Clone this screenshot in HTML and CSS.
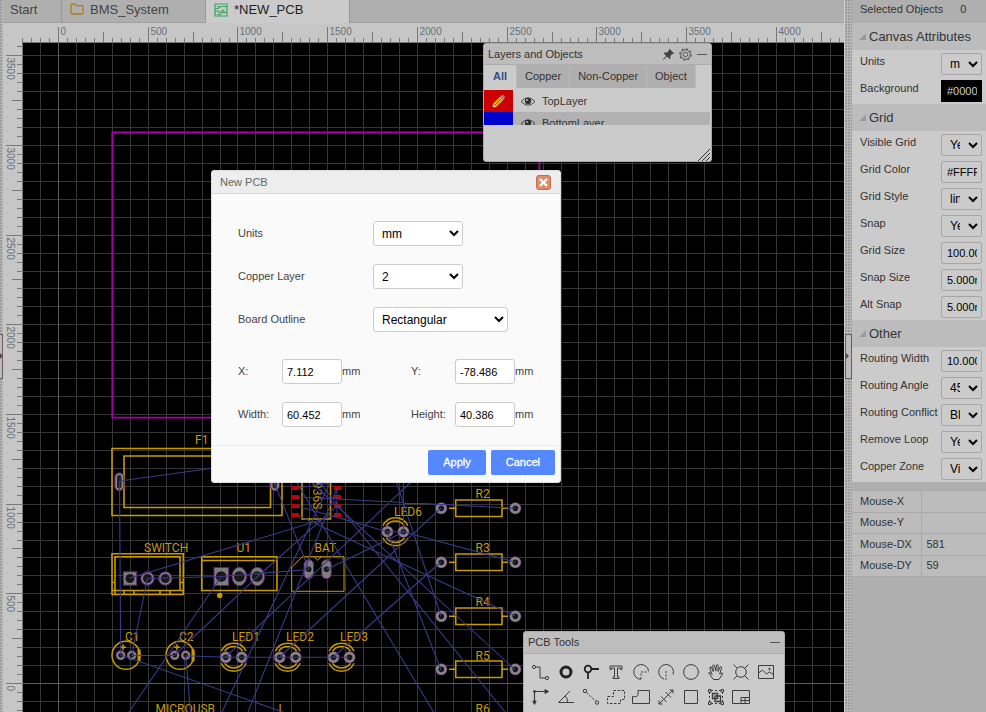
FILE: index.html
```html
<!DOCTYPE html>
<html lang="en">
<head>
<meta charset="utf-8">
<title>PCB Editor</title>
<link rel="stylesheet" href="styles.css">
</head>
<body>
<div class="app">
  <div class="splitter splitter-left"><span class="handle"></span></div>

  <main class="editor">
    <div class="doc-tabs" role="tablist">
      <button class="doc-tab tab-start" role="tab">Start</button>
      <button class="doc-tab" role="tab">
        <svg width="14" height="12" viewBox="0 0 14 12" fill="none" stroke="#b07c1c" stroke-width="1.3"><path d="M1 10V2q0-1 1-1h3l1.500 1.700H12q1 0 1 1V10q0 1-1 1H2q-1 0-1-1z"/></svg>
        BMS_System
      </button>
      <button class="doc-tab active" role="tab" aria-selected="true">
        <svg width="14" height="14" viewBox="0 0 14 14" fill="none" stroke="#3da35d" stroke-width="1.200"><path d="M1 1h12v12H1zM1 5.500h3l3-2h6M1 8h3l2 2h2M10 9.500h3M3 11.500h4M3 3.500h2"/><circle cx="8.800" cy="8.300" r="1.300"/></svg>
        *NEW_PCB
      </button>
    </div>

    <div class="workspace">
      <svg id="board" class="board" width="100%" height="100%" aria-label="PCB canvas">
        <defs>
          <g id="pad"><circle r="6" fill="#66207a"/><circle r="4.200" fill="#151515" stroke="#858585" stroke-width="2.600"/></g>
          <g id="pad-s"><circle r="5" fill="#66207a"/><circle r="3.400" fill="#151515" stroke="#858585" stroke-width="2"/></g>
          <g id="resistor" fill="none" stroke="#c79a00" stroke-width="1.600">
            <path d="M455.700 500h46.300v16.500h-46.300zM449 508.300h6.700M502 508.300h6"/>
            <use href="#pad" x="441.300" y="508.300" stroke="none"/><use href="#pad" x="515.300" y="508.300" stroke="none"/>
          </g>
          <g id="led">
            <g fill="none" stroke="#c79a00" stroke-width="1.500"><path d="M-12.500 -6A13.800 13.800 0 0 1 12.500 -6M-9 -6A11 11 0 0 1 9 -6M-12.500 6A13.800 13.800 0 0 0 12.500 6M-9 6A11 11 0 0 0 9 6"/></g>
            <use href="#pad" x="-8"/><use href="#pad" x="8"/>
          </g>
          <g id="cap">
            <g fill="none" stroke="#c79a00" stroke-width="1.500"><circle r="14"/><path d="M13 -6V6" stroke-width="3"/><path d="M-6 -8h6M-3 -11v6"/></g>
            <use href="#pad-s" x="-5.300"/><use href="#pad-s" x="5.700"/>
          </g>
        </defs>
        <g transform="translate(-3 -23)">
          <rect x="22" y="42" width="100%" height="100%" fill="#000"/>
          <path id="grid" class="grid-line"/>
          <path id="axis" class="axis-line"/>

          <path d="M112.300 132.500H539.300V417.700H112.300z" fill="none" stroke="#a800a8" stroke-width="1.800"/>

          <g class="silk">
            <path d="M112 448.500H282V515.500H112zM124 456H270.500V507.500H124z"/>
            <path d="M302 480V519H330.500V480"/>
            <path d="M112 553.700H183.300V594.500H112zM115 594V556.700H180V590.500M112 590.500H183M112 582.500h3v8M183 582.500h-3v8M124 590.500v4M134 590.500v4M160 590.500v4M170 590.500v4"/>
            <path d="M201.700 556.700H277V590.500H201.700zM201.700 560.500H277"/>
            <path class="thin" d="M302.500 556.700H344V591.300H291.700V567zM314 556.700l3.700 3.500 3.700-3.500"/>
            <circle cx="219.700" cy="595.500" r="2" fill="#c79a00"/>
          </g>

          <g fill="#c00000"><path d="M292 486h7v4h-7zM292 495h7v4h-7zM292 504h7v4h-7zM292 513h7v4h-7zM334 486h7v4h-7zM334 495h7v4h-7zM334 504h7v4h-7zM334 513h7v4h-7z"/></g>

          <g fill="#222" stroke="#858585" stroke-width="2">
            <rect x="116" y="474" width="6.500" height="15.500" rx="3.200"/><rect x="271.500" y="474" width="6.500" height="15.500" rx="3.200"/>
          </g>
          <g fill="none" stroke="#66207a"><rect x="114.800" y="472.800" width="9" height="18" rx="4.500"/><rect x="270.300" y="472.800" width="9" height="18" rx="4.500"/></g>
          <g fill="#7d7d7d" stroke="#66207a">
            <rect x="123.300" y="571.800" width="13.400" height="13.400"/><circle cx="147.500" cy="578.500" r="6.700"/><circle cx="165.300" cy="578.500" r="6.700"/>
            <rect x="214" y="567.500" width="14.500" height="18"/><ellipse cx="239.300" cy="576.500" rx="7.300" ry="9.300"/><ellipse cx="257.300" cy="576.500" rx="7.300" ry="9.300"/>
            <rect x="304" y="559.700" width="9.500" height="19" rx="4.700"/><rect x="321.700" y="559.700" width="9.500" height="19" rx="4.700"/>
          </g>
          <g fill="#181818"><circle cx="130" cy="578.500" r="4.500"/><circle cx="147.500" cy="578.500" r="4.500"/><circle cx="165.300" cy="578.500" r="4.500"/><circle cx="221.200" cy="576.500" r="5.300"/><circle cx="239.300" cy="576.500" r="5.300"/><circle cx="257.300" cy="576.500" r="5.300"/><circle cx="308.700" cy="569.300" r="2.800"/><circle cx="326.500" cy="569.300" r="2.800"/></g>

          <use href="#resistor"/><use href="#resistor" y="54"/><use href="#resistor" y="108"/><use href="#resistor" y="161"/>
          <use href="#cap" x="126" y="655.300"/><use href="#cap" x="180" y="655.300"/>
          <use href="#led" x="233.700" y="657.300"/><use href="#led" x="287.700" y="657.300"/><use href="#led" x="341.500" y="657.300"/><use href="#led" x="395.400" y="531.700"/>

          <g class="silk-text">
            <text x="195" y="444">F1</text><text x="144" y="551.500">SWITCH</text><text x="236.500" y="551.500">U1</text><text x="314.500" y="551.500">BAT</text>
            <text x="125" y="641">C1</text><text x="179" y="641">C2</text><text x="232" y="641">LED1</text><text x="286" y="641">LED2</text><text x="340" y="641">LED3</text><text x="394" y="515.500">LED6</text>
            <text x="475.500" y="498">R2</text><text x="475.500" y="552">R3</text><text x="475.500" y="606">R4</text><text x="475.500" y="659.500">R5</text><text x="475.500" y="713">R6</text>
            <text x="155.500" y="713">MICROUSB</text><text x="278.500" y="713">L</text>
            <text transform="translate(312.500 482) rotate(90)">936S</text>
          </g>

          <path class="rats" d="M120 481L250 463M119.500 481L120.700 655M130 578L337 515M147.500 578.500L221 576.500L308.500 569.500M147.500 578L131.700 655M221 577L129 712M174.700 655L257 577L337 506M225.700 657L412 481M279.700 657L441 508M333.500 657L441 562M222 712L330 483M248 712L337 488M131.700 655.500L174.700 655.500M185.700 655.700L225.700 657.300H350M120.700 655L283 712M185.700 655L190.500 712M274.500 483L308.700 569M297 506L387.400 531.700H403.400L515.300 562M297 497L515.300 508.300M297 515L515.300 616M297 488L330 483M403.500 532L326.500 569.500M396 481L441 616M387.400 532L441 670M403.500 483V532M297 483L433.500 712M320 483L505 712M312 483L515.300 670M337 488V515"/>

          <rect x="3" y="23" width="100%" height="19" fill="#c6c6c6"/>
          <rect x="3" y="23" width="19" height="100%" fill="#c6c6c6"/>
          <path d="M22.500 42.500H3000M22.500 42.500V3000" stroke="#777" fill="none"/>
          <path id="ticks" stroke="#777" fill="none"/>
          <g id="labels" class="ruler-text"></g>
        </g>
      </svg>

      <section class="float layers">
        <header class="float-head">
          <h2>Layers and Objects</h2>
          <button class="icon-btn" aria-label="Pin"><svg width="13" height="13" viewBox="0 0 13 13" fill="#444"><path d="M7.500.8l4.700 4.700-1 .6-.9-.2-2 2.100.2 2.200-1 .9-2.600-2.600L1.500 12l-.7-.3 3.300-3.900L1.700 5.400l.9-1 2.300.2 2.100-2-.2-.9z"/></svg></button>
          <button class="icon-btn" aria-label="Settings"><svg width="13" height="13" viewBox="0 0 13 13" fill="none" stroke="#555"><circle cx="6.500" cy="6.500" r="4.700"/><circle cx="6.500" cy="6.500" r="5.700" stroke-dasharray="2.200 2.200" stroke-width="1.200"/><circle cx="6.500" cy="6.500" r="2.200"/></svg></button>
          <button class="icon-btn" aria-label="Minimize"><svg width="12" height="13" viewBox="0 0 12 13" stroke="#555"><path d="M1 6.500h10"/></svg></button>
        </header>
        <div class="layer-tabs" role="tablist">
          <button class="layer-tab active" role="tab">All</button><button class="layer-tab" role="tab">Copper</button><button class="layer-tab" role="tab">Non-Copper</button><button class="layer-tab" role="tab">Object</button>
        </div>
        <div class="layer-list">
          <div class="layer">
            <span class="swatch red"><svg width="15" height="15" viewBox="0 0 15 15"><path d="M1 14l1.200-4.500 3.300 3.300z" fill="#e8d0a0"/><path d="M1 14l.5-1.900 1.400 1.400z" fill="#222"/><path d="M2.200 9.500L9 2.700 12.300 6l-6.800 6.800z" fill="#e8a820"/><path d="M3.800 11.200l6.800-6.800" stroke="#a86a00"/><path d="M9 2.700l1.100-1.100L13.400 4.900 12.300 6z" fill="#999"/><path d="M10.100 1.600q1.500-1.400 3 0t.3 3.300z" fill="#c87070"/></svg></span>
            <svg class="eye" width="16" height="11" viewBox="0 0 16 11"><path d="M1 5.500Q8-2 15 5.500 8 13 1 5.500z" fill="none" stroke="#444"/><circle cx="8" cy="5" r="3.200" fill="#333"/><circle cx="7" cy="4" r="1" fill="#bbb"/></svg>
            <span>TopLayer</span>
          </div>
          <div class="layer alt">
            <span class="swatch blue"></span>
            <svg class="eye" width="16" height="11" viewBox="0 0 16 11"><path d="M1 5.500Q8-2 15 5.500 8 13 1 5.500z" fill="none" stroke="#444"/><circle cx="8" cy="5" r="3.200" fill="#333"/><circle cx="7" cy="4" r="1" fill="#bbb"/></svg>
            <span>BottomLayer</span>
          </div>
        </div>
        <svg class="grip" width="12" height="12" viewBox="0 0 12 12" stroke="#333"><path d="M0 12L12 0M4 12l8-8M8 12l4-4"/></svg>
      </section>

      <section class="float tools">
        <header class="float-head">
          <h2>PCB Tools</h2>
          <button class="icon-btn" aria-label="Minimize"><svg width="12" height="13" viewBox="0 0 12 13" stroke="#555"><path d="M1 6.500h10"/></svg></button>
        </header>
        <div class="tool-grid">
          <button aria-label="Track"><svg viewBox="0 0 20 20"><path d="M4.500 5H9v11h5.500"/><circle cx="3" cy="5" r="1.600"/><circle cx="16" cy="16" r="1.600"/></svg></button>
          <button aria-label="Pad"><svg viewBox="0 0 20 20"><circle cx="10" cy="10" r="5" stroke-width="3" stroke="#222"/></svg></button>
          <button aria-label="Via"><svg viewBox="0 0 20 20"><g stroke-width="1.800" stroke="#222"><circle cx="7" cy="7" r="3.300"/><path d="M10.500 7H18M7 10.500V17"/></g></svg></button>
          <button aria-label="Text"><svg viewBox="0 0 20 20"><path d="M4 4h12v3.500h-1.500V6h-3v9H13v1.500H7V15h1.500V6h-3v1.500H4z"/></svg></button>
          <button aria-label="Arc"><svg viewBox="0 0 20 20"><path d="M17.500 9A7.400 7.400 0 1 0 10 17.300"/><path d="M10 17v-7h7.500" stroke-dasharray="2 1.500"/></svg></button>
          <button aria-label="Centre arc"><svg viewBox="0 0 20 20"><path d="M8 17A7.400 7.400 0 1 1 17 12.500"/><path d="M10 9v9" stroke-dasharray="2 1.500"/></svg></button>
          <button aria-label="Circle"><svg viewBox="0 0 20 20"><circle cx="10" cy="10" r="7.400"/></svg></button>
          <button aria-label="Move"><svg viewBox="0 0 20 20"><path d="M7.500 17.500L3 11.500q-.6-1.500 1-1l2 2L3.800 6q0-1.500 1.500-1l2 4.500L6.800 3.500q.6-1.500 1.700 0l1.300 5.500.7-6q1-1.200 1.700.2l-.2 6.300 2.200-4.500q1.300-.8 1.500.6l-2 6.400 2-1q1.500-.2.800 1l-3.500 5.500z"/></svg></button>
          <button aria-label="Hole"><svg viewBox="0 0 20 20"><circle cx="10" cy="10" r="5.300"/><path d="M2.500 2.500l3.800 3.800M17.500 2.500l-3.800 3.800M2.500 17.500l3.800-3.800M17.500 17.500l-3.800-3.800"/></svg></button>
          <button aria-label="Image"><svg viewBox="0 0 20 20"><path d="M2.500 3.500h15v13h-15zM2.500 11l4-3 4 4 3-2 4 2.500"/><circle cx="13.500" cy="7" r=".8"/></svg></button>
          <button aria-label="Canvas origin"><svg viewBox="0 0 20 20"><path d="M3.500 4v12M3 4.500h13" stroke-width="1.200"/><path d="M14 2.500l3.500 2-3.500 2zM1.800 14l1.700 3.500L5.200 14z" fill="#333"/><circle cx="3.500" cy="4.500" r="1" fill="#333"/></svg></button>
          <button aria-label="Protractor"><svg viewBox="0 0 20 20"><path d="M14 4L2.500 15.500H18M9 9q3 2 2.500 6.500"/></svg></button>
          <button aria-label="Connect"><svg viewBox="0 0 20 20"><circle cx="4" cy="4" r="1.700"/><circle cx="16" cy="15.500" r="1.700"/><path d="M5.500 5.500l9 8.500" stroke-dasharray="2.500 1.500"/></svg></button>
          <button aria-label="Copper area"><svg viewBox="0 0 20 20"><path d="M7.500 3.500h11v9h-4v4h-13v-7h6z" stroke-dasharray="2.500 1.500"/></svg></button>
          <button aria-label="Solid region"><svg viewBox="0 0 20 20"><path d="M7 3.500h11.500v13h-17v-7q5 1 5.500-2z"/></svg></button>
          <button aria-label="Dimension"><svg viewBox="0 0 20 20"><path d="M3 17l4.500-4.500M12.500 7.500L17 3M13.500 3H17v3.500M3 13.500V17h3.500M5 9.500l5.500 5.500M9.500 5l5.500 5.500M8 12l4-4"/></svg></button>
          <button aria-label="Rectangle"><svg viewBox="0 0 20 20"><path d="M3.500 3.500h13v13h-13z"/></svg></button>
          <button aria-label="Group"><svg viewBox="0 0 20 20"><path d="M6.500 6.500h5v5h-5zM9 9h5.500v5.500H9z" stroke-width="1.300"/><path d="M2.500 2.500H5V5H2.500zM15 2.500h2.500V5H15zM2.500 15H5v2.500H2.500zM15 15h2.500v2.500H15z"/><path d="M5 3.500h10M3.500 5v10M16.500 5v10M5 16.500h10" stroke-dasharray="2 2"/></svg></button>
          <button aria-label="Sheet"><svg viewBox="0 0 20 20"><path d="M1.500 3.500h17v13h-17zM10 10.500h8.500M10 13.500h8.500M10 10.500v6M14 10.500v6"/></svg></button>
        </div>
      </section>
    </div>
  </main>

  <div class="splitter splitter-right"><span class="handle"></span></div>

  <aside class="props">
    <div class="selected"><span>Selected Objects</span><span>0</span></div>
    <h3>Canvas Attributes</h3>
    <div class="prop"><label for="units">Units</label><select id="units"><option>mm</option></select></div>
    <div class="prop"><label for="bg">Background</label><input id="bg" class="dark" value="#000000"></div>
    <h3>Grid</h3>
    <div class="prop"><label for="vg">Visible Grid</label><select id="vg"><option>Yes</option></select></div>
    <div class="prop"><label for="gc">Grid Color</label><input id="gc" value="#FFFFFF"></div>
    <div class="prop"><label for="gs">Grid Style</label><select id="gs"><option>line</option></select></div>
    <div class="prop"><label for="sn">Snap</label><select id="sn"><option>Yes</option></select></div>
    <div class="prop"><label for="gz">Grid Size</label><input id="gz" value="100.000mil"></div>
    <div class="prop"><label for="ss">Snap Size</label><input id="ss" value="5.000mil"></div>
    <div class="prop"><label for="as">Alt Snap</label><input id="as" value="5.000mil"></div>
    <h3>Other</h3>
    <div class="prop"><label for="rw">Routing Width</label><input id="rw" value="10.000mil"></div>
    <div class="prop"><label for="ra">Routing Angle</label><select id="ra"><option>45°</option></select></div>
    <div class="prop"><label for="rc">Routing Conflict</label><select id="rc"><option>Block</option></select></div>
    <div class="prop"><label for="rl">Remove Loop</label><select id="rl"><option>Yes</option></select></div>
    <div class="prop"><label for="cz">Copper Zone</label><select id="cz"><option>Visible</option></select></div>
    <table class="mouse">
      <tr><th scope="row">Mouse-X</th><td></td></tr>
      <tr><th scope="row">Mouse-Y</th><td></td></tr>
      <tr><th scope="row">Mouse-DX</th><td>581</td></tr>
      <tr><th scope="row">Mouse-DY</th><td>59</td></tr>
    </table>
  </aside>
</div>

<form class="dialog" role="dialog" aria-labelledby="dlg-title">
  <header class="dialog-head">
    <h1 id="dlg-title">New PCB</h1>
    <button type="button" class="close" aria-label="Close"><svg width="9" height="9" viewBox="0 0 9 9" stroke="#fff" stroke-width="2.400"><path d="M1 1l7 7M8 1L1 8"/></svg></button>
  </header>
  <div class="dialog-body">
    <div class="field"><label for="d-units">Units</label><select id="d-units"><option>mm</option></select></div>
    <div class="field"><label for="d-layer">Copper Layer</label><select id="d-layer"><option>2</option></select></div>
    <div class="field"><label for="d-outline">Board Outline</label><select id="d-outline" class="wide"><option>Rectangular</option></select></div>
    <div class="measures">
      <div class="measure"><label for="d-x">X:</label><input id="d-x" value="7.112"><span>mm</span></div>
      <div class="measure"><label for="d-y">Y:</label><input id="d-y" value="-78.486"><span>mm</span></div>
      <div class="measure"><label for="d-w">Width:</label><input id="d-w" value="60.452"><span>mm</span></div>
      <div class="measure"><label for="d-h">Height:</label><input id="d-h" value="40.386"><span>mm</span></div>
    </div>
  </div>
  <footer class="dialog-foot">
    <button type="button">Apply</button>
    <button type="button">Cancel</button>
  </footer>
</form>
<script src="board.js"></script>
</body>
</html>
```
FILE: styles.css
```css
* { box-sizing: border-box; }
html, body { height: 100%; }
body {
  margin: 0;
  overflow: hidden;
  background: #afafaf;
  color: #333;
  font: 11px/13px "Liberation Sans", Arial, sans-serif;
}
button, input, select { font-family: inherit; color: inherit; }
h1, h2, h3 { margin: 0; font-weight: normal; }

.app { display: flex; height: 100vh; }

/* Splitters */
.splitter {
  flex: none;
  display: flex;
  flex-direction: column;
  justify-content: center;
  background: radial-gradient(circle at 1px 1px, #9c9c9c 0 1px, transparent 1px) 0 0 / 3px 3px #b8b8b8;
}
.splitter-left { width: 3px; }
.splitter-right { width: 8px; border-left: 1px solid #cfcfcf; }
.handle {
  height: 45px;
  border: 1px solid #6d5c5c;
  background: #bcbcbc;
  display: flex;
  align-items: center;
}
.handle::before { content: ""; border: 3px solid transparent; border-left-color: #5a4848; border-right: 0; }
.splitter-left .handle { border-left: 0; }

/* Document tabs */
.editor { flex: 1; min-width: 0; display: flex; flex-direction: column; }
.doc-tabs { display: flex; height: 23px; border-bottom: 1px solid #a0a0a0; background: #afafaf; }
.doc-tab {
  display: flex;
  align-items: center;
  gap: 6px;
  width: 144px;
  padding: 0 8px 4px;
  border: 0;
  border-right: 1px solid #989898;
  background: #afafaf;
  color: #444;
  font-size: 13px;
}
.tab-start { width: 59px; padding-left: 7px; }
.doc-tab.active { background: #cbcbcb; color: #222; height: 23px; }

.workspace { position: relative; flex: 1; min-height: 0; overflow: hidden; }
.board { display: block; }
.grid-line { stroke: #363636; fill: none; }
.axis-line { stroke: #5c5c5c; fill: none; }
.silk { fill: none; stroke: #c79a00; stroke-width: 1.6; }
.silk .thin { stroke-width: 1; }
.silk-text { fill: #c79a00; font: 12px Roboto, "Liberation Sans", sans-serif; }
.rats { stroke: #3a3a8a; stroke-width: 1.1; fill: none; }
.ruler-text { fill: #66707a; font-size: 10px; }

/* Floating panels */
.float {
  position: absolute;
  background: #cbcbcb;
  border: 1px solid #aaa;
  border-radius: 3px;
}
.layers { left: 480px; top: 20px; width: 229px; height: 119px; }
.tools { left: 520px; top: 608px; width: 262px; height: 100px; }
.float-head {
  display: flex;
  align-items: center;
  gap: 4px;
  height: 21px;
  padding: 0 3px 0 4px;
  background: #bdbdbd;
  border-bottom: 1px solid #adadad;
}
.float-head h2 { flex: 1; font-size: 11px; }
.icon-btn { display: flex; padding: 0; border: 0; background: none; }
.tools .float-head { height: 22px; }

.layer-tabs { display: flex; }
.layer-tab {
  height: 23px;
  padding: 0 8px 2px;
  border: 0;
  border-right: 1px solid #bbb;
  background: #afafaf;
  font-size: 11px;
}
.layer-tab.active { padding: 0 9px 2px; background: #cbcbcb; color: #2f4f86; font-weight: bold; }
.layer-list { height: 35px; margin: 2px 1px 0 0; overflow: hidden; }
.layer { display: flex; align-items: center; height: 22px; }
.layer.alt { background: #b1b1b1; }
.swatch { display: flex; align-items: center; justify-content: center; width: 29px; height: 22px; }
.red { background: #cc0000; }
.blue { background: #0000cc; }
.eye { margin: 0 6px 0 7px; }
.grip { position: absolute; right: 1px; bottom: 0; }

.tool-grid { display: grid; grid-template-columns: repeat(10, 25px); row-gap: 5px; padding: 8px 0 0 4px; }
.tool-grid button { display: flex; justify-content: center; padding: 0; border: 0; background: none; height: 20px; }
.tool-grid svg { width: 20px; height: 20px; fill: none; stroke: #3c3c3c; }

/* Property panel */
.props { flex: none; width: 134px; background: #afafaf; }
.selected { display: flex; gap: 17px; height: 23px; padding: 3px 8px; }
.props h3 {
  display: flex;
  align-items: center;
  gap: 3px;
  height: 27px;
  padding-left: 7px;
  background: #bcbcbc;
  font-size: 13px;
}
.props h3::before { content: ""; border: solid transparent; border-width: 0 0 7px 7px; border-bottom-color: #999; }
.prop {
  display: flex;
  justify-content: space-between;
  height: 27px;
  padding: 3px 4px 0 8px;
  background: #cbcbcb;
}
.prop label { padding-top: 2px; white-space: nowrap; }
.prop input, .prop select {
  width: 41px;
  height: 22px;
  border: 1px solid #a6a6a6;
  border-radius: 2px;
  background: #cbcbcb;
  color: #000;
}
.prop input { padding: 0 4px 0 5px; font-size: 11px; }
.prop select { padding: 0 5px 0 4px; font-size: 12px; }
.prop input.dark { background: #000; border-color: #000; border-radius: 0; color: #ccc; }
.mouse {
  width: 100%;
  height: 87px;
  margin-top: 8px;
  border-collapse: collapse;
  background: #bcbcbc;
}
.mouse th, .mouse td { padding: 0 5px; border: 1px solid #a9a9a9; border-width: 1px 0; text-align: left; font-weight: normal; }
.mouse th { width: 69px; padding-left: 8px; border-right-width: 1px; }

/* Dialog */
.dialog {
  position: absolute;
  left: 211px;
  top: 170px;
  width: 350px;
  border: 1px solid #ddd;
  border-radius: 3px;
  background: #fafafa;
  color: #444;
}
.dialog-head {
  display: flex;
  align-items: center;
  justify-content: space-between;
  height: 23px;
  padding: 0 9px 0 8px;
  background: #ededed;
  border-bottom: 1px solid #d8d8d8;
}
.dialog-head h1 { font-size: 11px; color: #666; }
.close {
  display: flex;
  align-items: center;
  justify-content: center;
  width: 15px;
  height: 15px;
  padding: 0;
  border: 1px solid #bd6f52;
  border-radius: 3px;
  background: #e18b6b;
}
.dialog-body { display: grid; gap: 18px; padding: 27px 0 18px 26px; }
.field { display: flex; align-items: center; }
.field label { width: 135px; }
.dialog select, .dialog input {
  height: 25px;
  border: 1px solid #ccc;
  border-radius: 3px;
  background: #fff;
  color: #000;
}
.dialog select { width: 90px; padding: 0 4px; font-size: 12px; }
.dialog select.wide { width: 135px; }
.dialog input { width: 60px; padding: 0 4px; font-size: 11px; }
.measures { display: grid; grid-template-columns: 173px 1fr; row-gap: 18px; padding-top: 9px; }
.measure { display: flex; align-items: center; }
.measure label { width: 44px; }
.dialog-foot {
  display: flex;
  justify-content: flex-end;
  gap: 5px;
  padding: 4px 5px 7px;
  border-top: 1px solid #eee;
}
.dialog-foot button {
  height: 25px;
  padding: 0 15px 2px;
  border: 0;
  border-radius: 2px;
  background: #5588ff;
  color: #fff;
  font-size: 11px;
  -webkit-text-stroke: 0.3px #fff;
}
```
FILE: board.js
```js
// Draws the board grid and the two rulers. The origin is the canvas zero point.
const origin = { x: 58, y: 683 };
const stepX = 8.974;
const stepY = 8.967;
const box = document.getElementById("board").getBoundingClientRect();
let grid = "";
let ticks = "";
let labels = "";

for (let i = -4; ; i++) {
  const x = Math.round(origin.x + i * stepX) + 0.5;
  if (x > box.right) break;
  if (x < 22) continue;
  if (i % 2 === 0) grid += `M${x} 43V${box.bottom}`;
  const top = i % 10 === 0 ? 27 : i % 5 === 0 ? 32 : 38;
  ticks += `M${x} ${top}V42`;
  if (i % 10 === 0) labels += `<text x="${x + 2}" y="35">${Math.abs(i) * 50}</text>`;
}

for (let i = 71; ; i--) {
  const y = Math.round(origin.y - i * stepY) + 0.5;
  if (y > box.bottom) break;
  if (y < 43) continue;
  if (i % 2 === 0) grid += `M23 ${y}H${box.right}`;
  const left = i % 10 === 0 ? 6 : i % 5 === 0 ? 12 : 17;
  ticks += `M${left} ${y}H22`;
  if (i % 10 === 0) labels += `<text transform="translate(7 ${y + 2}) rotate(90)">${Math.abs(i) * 50}</text>`;
}

document.getElementById("grid").setAttribute("d", grid);
document.getElementById("axis").setAttribute("d", `M${origin.x + 0.5} 43V${box.bottom}M23 ${origin.y + 0.5}H${box.right}`);
document.getElementById("ticks").setAttribute("d", ticks);
document.getElementById("labels").innerHTML = labels;
```
